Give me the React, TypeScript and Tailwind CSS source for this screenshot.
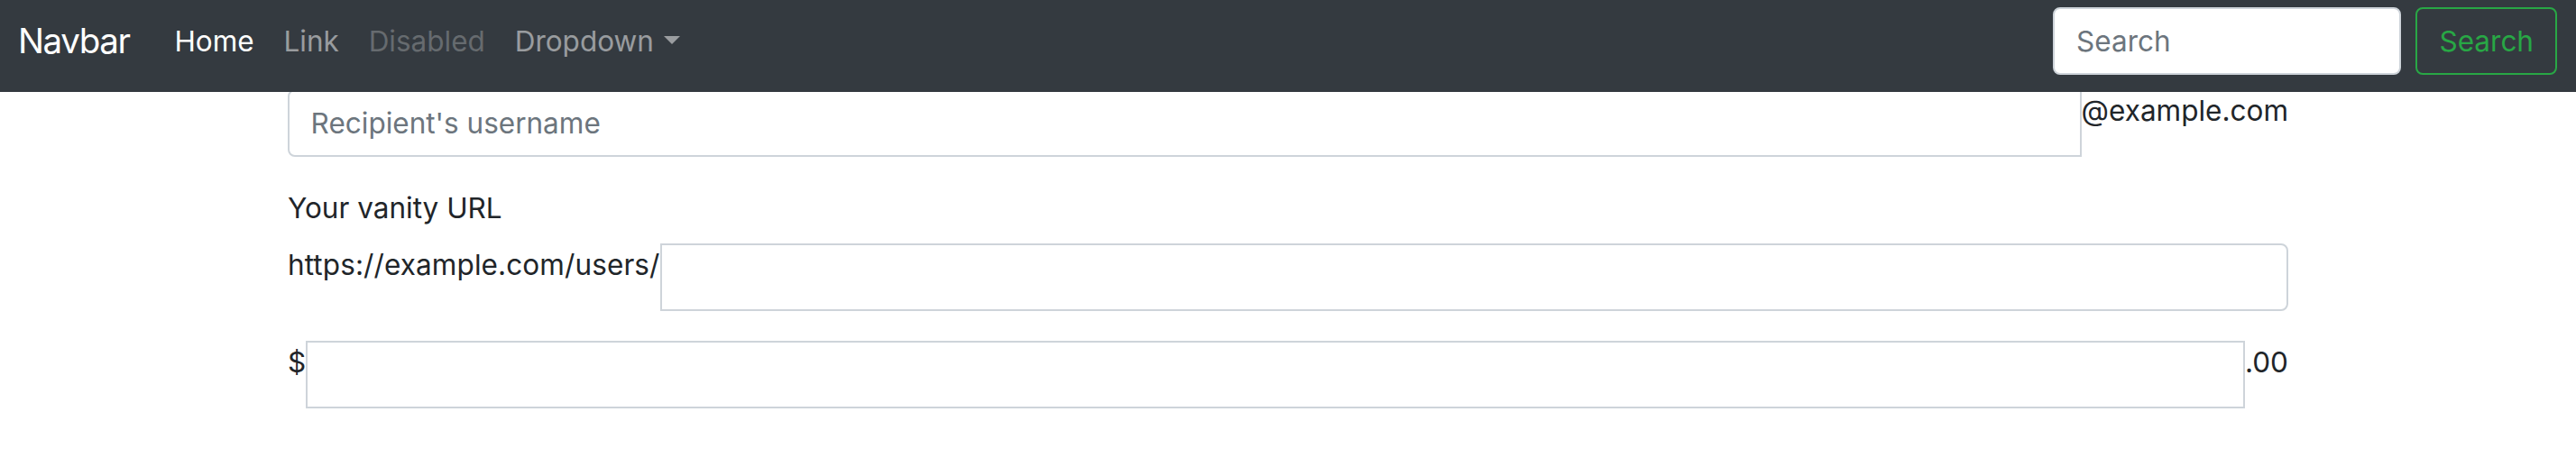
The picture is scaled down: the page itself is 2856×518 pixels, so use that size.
import React from "react";

const navLinks = [
  { label: "Home", className: "text-white" },
  { label: "Link", className: "text-white/50" },
  { label: "Disabled", className: "text-white/25" },
];

function TopNav() {
  return (
    <nav className="fixed top-0 inset-x-0 z-10 h-[102px] bg-[#343a40] pt-[8px] pl-[20px] pr-[21px]">
      <div className="flex h-[75px] w-full items-center">
        <a className="mr-[33.5px] py-[5px] text-[38.5px] leading-[1.5] tracking-[-1.4px] text-white" href="#">
          Navbar
        </a>
        <ul className="flex items-center">
          {navLinks.map((link) => (
            <li key={link.label}>
              <a className={`block px-[16.4px] ${link.className}`} href="#">
                {link.label}
              </a>
            </li>
          ))}
          <li>
            <a className="block px-[16.4px] text-white/50" href="#">
              Dropdown
              <span className="ml-[11px] inline-block h-0 w-0 border-x-[9.45px] border-t-[9.45px] border-b-0 border-solid border-x-transparent border-t-current align-[0.255em]" />
            </a>
          </li>
        </ul>
        <form className="ml-auto flex items-center">
          <input
            className="mr-[16px] h-[75px] w-[386px] rounded-[8px] border-2 border-solid border-[#ced4da] bg-white px-[23.6px] text-[#495057] outline-none placeholder:text-[#6c757d]"
            placeholder="Search"
          />
          <button
            type="button"
            className="h-[75px] rounded-[8px] border-2 border-solid border-[#28a745] px-[24px] text-[#28a745]"
          >
            Search
          </button>
        </form>
      </div>
    </nav>
  );
}

export default function App() {
  return (
    <div className="min-h-[518px] bg-white font-[Inter,'Liberation_Sans',sans-serif] text-[31.5px] leading-[1.5] text-[#212529]">
      <TopNav />
      <main className="ml-[319px] w-[2218px] pt-[99px]">
        <div className="mb-[33px] flex">
          <input
            className="h-[75px] min-w-0 flex-1 rounded-l-[8px] border-2 border-solid border-[#ced4da] px-[23.6px] outline-none placeholder:text-[#6c757d]"
            placeholder="Recipient's username"
          />
          <span>@example.com</span>
        </div>

        <label className="mb-[16px] block">Your vanity URL</label>
        <div className="mb-[33px] flex">
          <span className="tracking-[0.1px]">https://example.com/users/</span>
          <input className="h-[75px] min-w-0 flex-1 rounded-r-[8px] border-2 border-solid border-[#ced4da] px-[23.6px] outline-none" />
        </div>

        <div className="flex">
          <span>$</span>
          <input className="h-[75px] min-w-0 flex-1 border-2 border-solid border-[#ced4da] px-[23.6px] outline-none" />
          <span>.00</span>
        </div>
      </main>
    </div>
  );
}
